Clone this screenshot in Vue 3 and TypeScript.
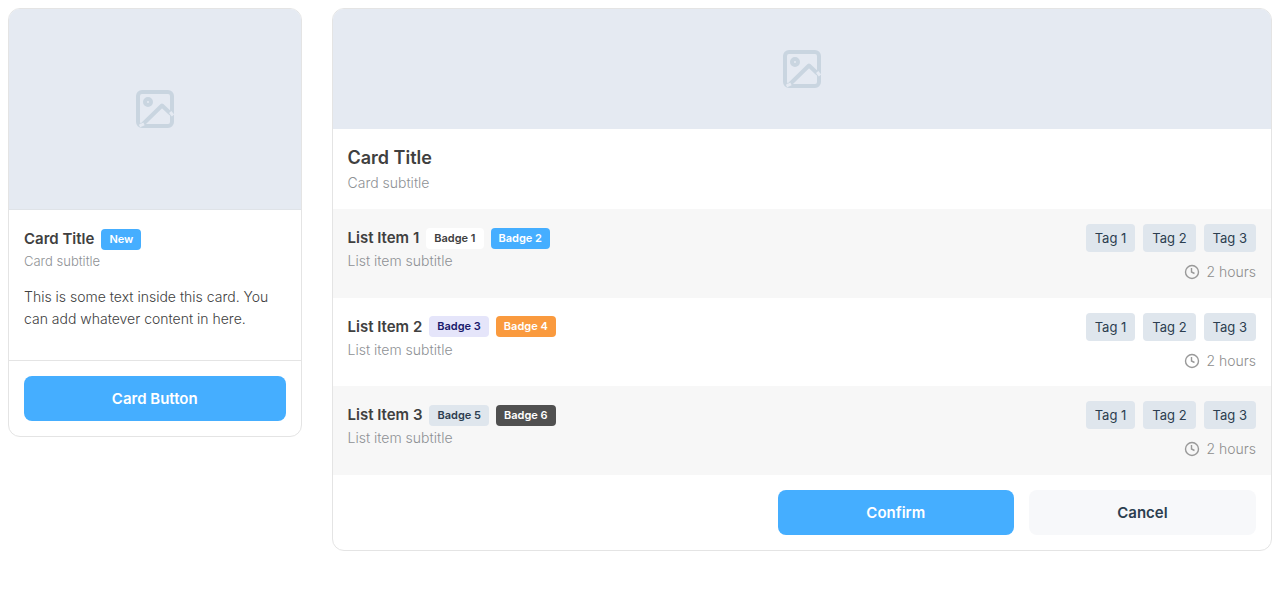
<script setup lang="ts">
interface Badge {
  label: string
  tone: string
}

interface Item {
  title: string
  badges: Badge[]
}

const items: Item[] = [
  { title: 'List Item 1', badges: [{ label: 'Badge 1', tone: 'white' }, { label: 'Badge 2', tone: 'primary' }] },
  { title: 'List Item 2', badges: [{ label: 'Badge 3', tone: 'lavender' }, { label: 'Badge 4', tone: 'orange' }] },
  { title: 'List Item 3', badges: [{ label: 'Badge 5', tone: 'grey' }, { label: 'Badge 6', tone: 'dark' }] },
]
const tags: string[] = ['Tag 1', 'Tag 2', 'Tag 3']
</script>

<template>
  <main class="page">
    <article class="card small">
      <div class="media tall">
        <svg class="picture" viewBox="0 0 40 40" aria-hidden="true">
          <rect x="3" y="3" width="34" height="34" rx="4" />
          <circle cx="13" cy="13" r="3" />
          <path d="M7 36 27 16.5 36 25" />
          <path class="cut" d="M4.5 37 9 34.8M35.2 23l2.8 3.5" />
        </svg>
      </div>
      <div class="content">
        <div class="heading">
          <h2>Card Title</h2>
          <span class="badge primary">New</span>
        </div>
        <p class="subtitle">Card subtitle</p>
        <p class="text">This is some text inside this card. You can add whatever content in here.</p>
      </div>
      <footer class="single">
        <button type="button" class="button primary">Card Button</button>
      </footer>
    </article>

    <article class="card large">
      <div class="media short">
        <svg class="picture" viewBox="0 0 40 40" aria-hidden="true">
          <rect x="3" y="3" width="34" height="34" rx="4" />
          <circle cx="13" cy="13" r="3" />
          <path d="M7 36 27 16.5 36 25" />
          <path class="cut" d="M4.5 37 9 34.8M35.2 23l2.8 3.5" />
        </svg>
      </div>
      <header class="intro">
        <h2>Card Title</h2>
        <p class="subtitle">Card subtitle</p>
      </header>
      <ul class="list">
        <li v-for="item in items" :key="item.title" class="row">
          <div>
            <div class="heading">
              <h3>{{ item.title }}</h3>
              <span v-for="badge in item.badges" :key="badge.label" class="badge" :class="badge.tone">{{ badge.label }}</span>
            </div>
            <p class="subtitle">List item subtitle</p>
          </div>
          <div class="side">
            <div class="tags">
              <span v-for="tag in tags" :key="tag" class="tag">{{ tag }}</span>
            </div>
            <div class="time">
              <svg class="clock" viewBox="0 0 16 16" aria-hidden="true">
                <circle cx="8" cy="8" r="6.5" />
                <path d="M7.5 4v4l3 1.5" />
              </svg>
              <span>2 hours</span>
            </div>
          </div>
        </li>
      </ul>
      <footer class="actions">
        <button type="button" class="button primary confirm">Confirm</button>
        <button type="button" class="button cancel">Cancel</button>
      </footer>
    </article>
  </main>
</template>

<style>
body {
  margin: 0;
  background: #fff;
}
</style>

<style scoped>
.page {
  display: grid;
  grid-template-columns: repeat(12, minmax(0, 1fr));
  gap: 30px;
  align-items: start;
  padding: 8px;
  color: #404040;
  font-family: Inter, "Liberation Sans", sans-serif;
  font-size: 14px;
  line-height: 22px;
}
h2,
h3,
p,
ul {
  margin: 0;
  padding: 0;
}
.card {
  border: 1px solid #e4e4e4;
  border-radius: 12px;
  overflow: hidden;
  background: #fff;
}
.small {
  grid-column: span 3;
}
.large {
  grid-column: span 9;
}
.media {
  display: flex;
  align-items: center;
  justify-content: center;
  background: #e5eaf2;
}
.tall {
  height: 200px;
  border-bottom: 1px solid #dfe3e8;
}
.short {
  height: 120px;
}
.picture {
  width: 40px;
  height: 40px;
  fill: none;
  stroke: #c9d5e0;
  stroke-width: 4;
  stroke-linejoin: round;
}
.picture .cut {
  stroke: #e5eaf2;
  stroke-width: 3;
}
.content {
  padding: 17px 15px 30px;
}
.heading {
  display: flex;
  align-items: center;
  gap: 7px;
}
h2,
h3 {
  font-size: 15px;
  font-weight: 600;
  line-height: 24px;
}
.subtitle {
  color: #8e9195;
  font-weight: 300;
}
.small .subtitle {
  font-size: 13px;
  line-height: 20px;
}
.text {
  margin-top: 15px;
  font-weight: 300;
}
.badge {
  padding: 0 8px;
  border-radius: 4px;
  font-size: 11px;
  line-height: 21px;
  font-weight: 600;
  white-space: nowrap;
}
.primary {
  background: #45aeff;
  color: #fff;
}
.white {
  background: #fff;
  color: #404040;
}
.lavender {
  background: #e5e5fa;
  color: #19196b;
}
.orange {
  background: #fa9a3e;
  color: #fff;
}
.grey {
  background: #dfe6ed;
  color: #2c3e50;
}
.dark {
  background: #505050;
  color: #fff;
}
.single {
  padding: 15px;
  border-top: 1px solid #e4e4e4;
}
.button {
  height: 45px;
  padding: 0 15px;
  border: 0;
  border-radius: 8px;
  font: inherit;
  font-size: 15px;
  font-weight: 600;
  cursor: pointer;
}
.single .button {
  width: 100%;
}
.intro {
  padding: 15px;
}
.intro h2 {
  font-size: 18px;
  line-height: 28px;
}
.list {
  display: grid;
  grid-auto-rows: 1fr;
  min-height: 266px;
  list-style: none;
}
.row {
  display: flex;
  justify-content: space-between;
  padding: 15px 15px 14px;
}
.row:nth-child(odd) {
  background: #f7f7f7;
}
.row .heading {
  height: 28px;
}
.row .subtitle {
  line-height: 18px;
}
.side {
  display: flex;
  flex-direction: column;
  align-items: flex-end;
  gap: 9px;
}
.tags {
  display: flex;
  gap: 8px;
}
.tag {
  padding: 0 9px;
  border-radius: 4px;
  background: #dfe6ed;
  color: #2c3e50;
  font-size: 13px;
  line-height: 28px;
}
.time {
  display: flex;
  align-items: center;
  gap: 6px;
  color: #8e8e8e;
  font-weight: 300;
}
.clock {
  width: 16px;
  height: 16px;
  fill: none;
  stroke: #999;
  stroke-width: 1.4;
}
.actions {
  display: flex;
  justify-content: flex-end;
  gap: 15px;
  padding: 15px;
}
.confirm {
  width: 26%;
}
.cancel {
  width: 25%;
  background: #f7f8fa;
  color: #2c3e50;
}
</style>
